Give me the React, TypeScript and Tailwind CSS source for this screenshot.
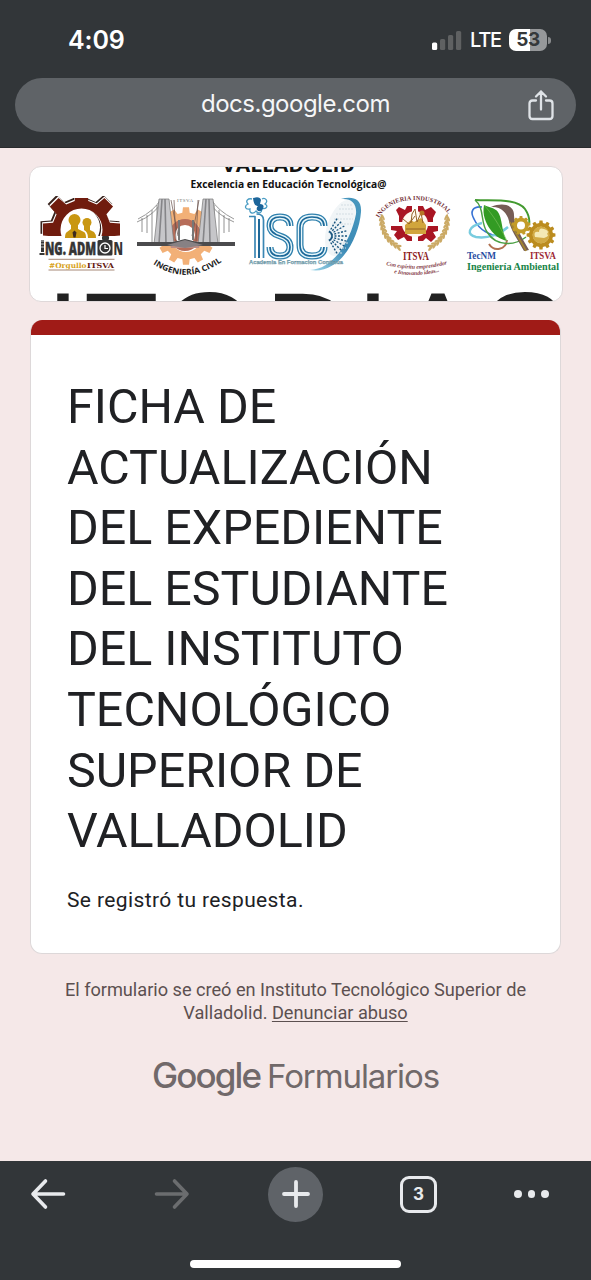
function Gear({ cx, cy, r, teeth, fill, hole, depth = 0.22 }: { cx: number; cy: number; r: number; teeth: number; fill: string; hole: number; depth?: number }) {
  const pts: string[] = [];
  const step = (Math.PI * 2) / teeth;
  for (let i = 0; i < teeth; i++) {
    const a = i * step - Math.PI / 2;
    const inner = r * (1 - depth);
    [[-0.3, inner], [-0.2, r], [0.2, r], [0.3, inner]].forEach(([o, q]) => {
      pts.push(`${(cx + Math.cos(a + o * step) * q).toFixed(2)} ${(cy + Math.sin(a + o * step) * q).toFixed(2)}`);
    });
  }
  const d = `M${pts.join('L')}Z M${cx - hole} ${cy}a${hole} ${hole} 0 1 0 ${hole * 2} 0a${hole} ${hole} 0 1 0 ${-hole * 2} 0Z`;
  return <path d={d} fill={fill} fillRule="evenodd" />;
}

function AdmonLogo() {
  return (
    <g>
      <defs>
        <clipPath id="admonTop"><path d="M38 196H68V198H94V196H128V236H38Z" /></clipPath>
      </defs>
      <g clipPath="url(#admonTop)">
        <Gear cx={80} cy={227.5} r={40} teeth={8} fill="#38231d" hole={20} depth={0.25} />
        <Gear cx={81.2} cy={228.5} r={39.5} teeth={8} fill="#fff" hole={20} depth={0.25} />
        <Gear cx={81.5} cy={229.5} r={39} teeth={8} fill="#701c0e" hole={21} depth={0.25} />
      </g>
      <g fill="#c99712">
        <circle cx="74.500" cy="220" r="6" />
        <path d="M71 223h7v6l6 3q2 1 2 6H65q0-5 2-6l4-3z" />
        <circle cx="87" cy="222.500" r="4.500" />
        <path d="M84 225h6v5l4 2q2 2 2 6h-8q0-6-4-8z" />
      </g>
      <path d="M74.500 230.500l2 2-1 5h-2l-1-5z" fill="#3c2a20" />
      <g fill="#353535" fontFamily="'Open Sans', 'Noto Sans', sans-serif" fontWeight="800">
        <rect x="41" y="240" width="3" height="12" />
        <path d="M40 241h4m-4 3h4m-4 3h4" stroke="#fff" strokeWidth=".7" />
        <rect x="39.500" y="253" width="5" height="2" />
        <text x="45" y="255" fontSize="17" textLength="51" lengthAdjust="spacingAndGlyphs" stroke="#353535" strokeWidth=".5">NG. ADM</text>
        <rect x="97.500" y="240" width="15" height="15.500" rx="1.500" />
        <rect x="102" y="236" width="7" height="4" rx="1" />
        <circle cx="105" cy="248" r="5" fill="none" stroke="#fff" strokeWidth="1.300" />
        <path d="M105 245v3.500h3" fill="none" stroke="#fff" strokeWidth="1.200" />
        <text x="113.500" y="255" fontSize="17" textLength="9.500" lengthAdjust="spacingAndGlyphs">N</text>
      </g>
      <path d="M48.500 259.300h66M48.500 270h66" stroke="#8f6a54" strokeWidth=".8" />
      <g fontFamily="'DejaVu Serif', serif" fontWeight="700" fontSize="7">
        <text x="49" y="267.500" fill="#d7a21a" textLength="37.500" lengthAdjust="spacingAndGlyphs">#Orgullo</text>
        <text x="87" y="267.500" fill="#64180f" textLength="27" lengthAdjust="spacingAndGlyphs">ITSVA</text>
      </g>
    </g>
  );
}

function BridgeTower({ x }: { x: number }) {
  return (
    <g>
      <path d={`M${x - 5} 199h10l5 45h-20z`} fill="#c6c6c9" stroke="#777" strokeWidth=".7" />
      <path d={`M${x - 2} 199l-3 45M${x + 1} 199l1 45`} stroke="#858588" strokeWidth="1.600" fill="none" />
    </g>
  );
}

function CivilLogo() {
  return (
    <g>
      <Gear cx={186} cy={236} r={29} teeth={12} fill="#f2b077" hole={16} depth={0.19} />
      <circle cx="185" cy="235" r="13" fill="none" stroke="#b76d59" strokeWidth="6" />
      <path d="M169 241h32l-2 7h-28z" fill="#bd8e85" />
      <path d="M137 222q18-7 27-23M138 219q16-8 23-20M234 222q-18-7-27-23M234 219q-16-8-23-20" fill="none" stroke="#8c8c8c" strokeWidth=".9" />
      <path d="M142 218v14M147 215v18M152 210v32M157 205v37M229 218v14M224 215v18M219 210v32M214 205v37" stroke="#777" strokeWidth=".8" />
      <path d="M171 200l7 36M174 200l2 42M199 200l-7 36M198 200l-2 42" stroke="#674f49" strokeWidth=".7" />
      <BridgeTower x={164} />
      <BridgeTower x={208} />
      <path d="M137 242h36l12-3 12 3h38v4h-40l-10-4-10 4h-38z" fill="#4b4b4d" />
      <path d="M167 245l18-5 18 5-18 3z" fill="#878184" />
      <path d="M179 220v20M193 220v20" stroke="#777" strokeWidth="2" />
      <text x="177" y="202" fontFamily="'Liberation Serif', serif" fontSize="5" fill="#777" textLength="16">ITSVA</text>
      <path id="civilArc" d="M153 264Q186 286 220 263" fill="none" />
      <text fontFamily="'Open Sans', 'Noto Sans', sans-serif" fontWeight="700" fontSize="8" fill="#222">
        <textPath href="#civilArc" textLength="74" lengthAdjust="spacingAndGlyphs">INGENIERÍA CIVIL</textPath>
      </text>
    </g>
  );
}

const RAYS = [-60, -45, -30, -15, 0, 15, 30, 45, 60];

function IscLogo() {
  const s = 'M290 226q0-9-10-9t-10 9q0 7 10 10t10 11q0 9-10 9t-10-9';
  const c = 'M324 226q0-9-12-9t-12 11v17q0 11 12 11t12-9';
  return (
    <g>
      <defs>
        <linearGradient id="orbit" x1="0" y1="1" x2="1" y2="0">
          <stop offset="0" stopColor="#9ed7e9" />
          <stop offset=".5" stopColor="#3b89b5" />
          <stop offset="1" stopColor="#4999bf" />
        </linearGradient>
      </defs>
      <ellipse cx="341" cy="228" rx="14" ry="29" fill="#f1f5f7" transform="rotate(18 341 228)" />
      <path d="M341 199C352 196 362 198 361 212C359 238 340 275 310 270C334 269 351 240 356 214C357 203 351 198 341 199Z" fill="url(#orbit)" />
      <g stroke="#d3dee4" strokeWidth="1.200" strokeDasharray="2 1">
        <path d="M341 205h12M339 209h15M336 214h18M334 219h19M332 224h19M340 243h8M336 248h10M334 253h8" />
      </g>
      <path d="M252 199c-4-1-7 2-4 5-4 2-3 6 2 5-1 5 4 5 6 2 3 4 7 1 5-3 5 2 8-2 4-4 4-3 0-7-3-5" fill="#fff" stroke="#4b9dc4" strokeWidth="1.300" />
      <path d="M253 198q7-2 8 2l-1 4q5 0 3 5-3 4-6 1-1-2 1-4-4 1-5-8z" fill="#1c659a" />
      <g fill="none" strokeLinejoin="round">
        <path d="M249 216.500h6V258M263.500 258V220q0-6-7-6" stroke="#3b87b4" strokeWidth="1.700" />
        <path d="M259 219V258" stroke="#1f6898" strokeWidth="2" />
        <path d={s} stroke="#2f80ad" strokeWidth="7" />
        <path d={s} stroke="#e9f7fb" strokeWidth="4.400" />
        <path d={s} stroke="#1b6899" strokeWidth="1.700" />
        <path d={c} stroke="#2f80ad" strokeWidth="7" />
        <path d={c} stroke="#e9f7fb" strokeWidth="4.400" />
        <path d={c} stroke="#1b6899" strokeWidth="1.700" />
      </g>
      <g stroke="#17547e" strokeWidth="1.400" strokeDasharray="2 1.500">
        {RAYS.map((a) => <path key={a} d="M331 236h16" transform={`rotate(${a} 327 236)`} />)}
      </g>
      <text x="249" y="264" fontFamily="'Liberation Sans', sans-serif" fontSize="5.800" fontWeight="700" fill="#8ebbc9" stroke="#527b8c" strokeWidth=".25" textLength="94" lengthAdjust="spacingAndGlyphs">Academia En Formacion Continua</text>
    </g>
  );
}

const LAUREL = Array.from({ length: 9 }, (_, i) => i);

function IndustrialLogo() {
  return (
    <g>
      <g fill="#a91523">
        <path d="M396 210l3-3 6 3 2-4h5v16h-13v-6z" />
        <path d="M418 206h5l2 4 6-3 5 5-3 6v4h-15z" />
        <path d="M391 226h21v15h-5l-3-4-6 3-4-5 3-4-6-1z" />
        <path d="M418 226h20v5l-5 1 3 5-5 5-5-4-3 3h-5z" />
      </g>
      <circle cx="415" cy="224" r="13" fill="#fff8ef" />
      <path d="M405 225l6-5 3 2 7-4 5 7v9h-21z" fill="#d1a53c" />
      <path d="M411 223l1-9 3-5 2 13 4-9 2 10M403 219l6 5 6-8M406 229h19" fill="none" stroke="#936227" strokeWidth="1" />
      <circle cx="422" cy="213" r="2.500" fill="#b77727" />
      {LAUREL.map((i) => {
        const a = 2.08 + i * 0.14;
        const x = 415 + Math.cos(a) * 34;
        const y = 220 + Math.sin(a) * 32;
        const deg = (a * 180) / Math.PI;
        return (
          <g key={i} fill="#cbaa66">
            <ellipse cx={x} cy={y} rx="1.300" ry="3.600" transform={`rotate(${deg + 205} ${x} ${y})`} />
            <ellipse cx={x - 2} cy={y} rx="1.200" ry="3.300" transform={`rotate(${deg - 30} ${x} ${y})`} />
            <ellipse cx={829 - x} cy={y} rx="1.300" ry="3.600" transform={`rotate(${-deg - 205} ${829 - x} ${y})`} />
            <ellipse cx={831 - x} cy={y} rx="1.200" ry="3.300" transform={`rotate(${-deg + 30} ${829 - x} ${y})`} />
          </g>
        );
      })}
      <path id="industrialArc" d="M379 218Q389 200 415 200T450 217" fill="none" />
      <text fontFamily="'Liberation Serif', serif" fontSize="6.200" fontWeight="700" fill="#733037">
        <textPath href="#industrialArc" textLength="80">INGENIERIA INDUSTRIAL</textPath>
      </text>
      <text x="403" y="260" fontFamily="'Liberation Serif', serif" fontSize="13" fontWeight="700" fill="#8c1820" textLength="26" lengthAdjust="spacingAndGlyphs">ITSVA</text>
      <g fontFamily="'Liberation Serif', serif" fontSize="5.800" fontStyle="italic" fontWeight="700" fill="#854149">
        <path id="mottoOne" d="M386 265Q416 273 448 264" fill="none" />
        <path id="mottoTwo" d="M394 273Q417 278 441 271" fill="none" />
        <text><textPath href="#mottoOne" textLength="62">Con espíritu emprendedor</textPath></text>
        <text><textPath href="#mottoTwo" textLength="46">e Innovando ideas...</textPath></text>
      </g>
    </g>
  );
}

function AmbientalLogo() {
  return (
    <g>
      <path d="M482 207c-10-1-12 5-8 12 5 11 16 17 27 17" fill="none" stroke="#3974d5" strokeWidth="1.600" />
      <path d="M482 223c-14 3-16 12-6 14 12 2 24-3 32-10" fill="none" stroke="#79ccdf" strokeWidth="2.400" />
      <path d="M489 244c5 8 17 6 18-4" fill="none" stroke="#b17150" strokeWidth="2" />
      <path d="M484 205c-2 10 2 18 6 24 5 7 10 10 17 12-6-9-4-26-11-31-4-3-8-3-12-5z" fill="#339b24" />
      <path d="M484 205c8 9 15 19 23 36" fill="none" stroke="#75bf58" strokeWidth=".7" />
      <path d="M475 200c18 1 42-2 50 9 4 6 5 11 4 16" fill="none" stroke="#439a30" strokeWidth="2" />
      <path d="M475 200c10 8 5 22 12 32 10 16 29 13 39 5" fill="none" stroke="#4ba044" strokeWidth="1.500" />
      <path d="M491 207c12-5 23-2 23 8 0 9 5 18 15 35l-5 1c-7-13-13-20-15-30-2-9-9-15-18-14z" fill="#765d56" />
      <path d="M510 222c5 11 11 19 16 29" fill="none" stroke="#a2852e" strokeWidth="1.600" />
      <Gear cx={521} cy={225.5} r={9.5} teeth={9} fill="#c39b29" hole={4} depth={0.18} />
      <Gear cx={541} cy={235} r={14.5} teeth={12} fill="#bb8c1f" hole={8.2} depth={0.17} />
      <circle cx="541" cy="235" r="8.500" fill="#d1aa45" />
      <path d="M535 237q-2-6 4-5 0-5 5-3 6 2 3 5 3 2-3 4z" fill="#f4e9b5" />
      <g fontFamily="'Liberation Serif', serif" fontWeight="700">
        <text x="467" y="258.500" fontSize="9.500" fill="#284da2" textLength="29" lengthAdjust="spacingAndGlyphs">TecNM</text>
        <text x="530" y="258.500" fontSize="9.500" fill="#9d2634" textLength="26" lengthAdjust="spacingAndGlyphs">ITSVA</text>
        <text x="467" y="270" fontSize="10" fill="#168447" textLength="92" lengthAdjust="spacingAndGlyphs">Ingeniería Ambiental</text>
      </g>
    </g>
  );
}

function Banner() {
  return (
    <div className="ml-[29px] mr-7 h-[136px] shrink-0 overflow-hidden rounded-xl border border-[#dfd8d9] bg-white">
      <svg viewBox="30 167 532 134" className="block h-[134px] w-[532px]">
        <g fontFamily="'Open Sans', 'Noto Sans', sans-serif" fontWeight="700" fill="#111">
          <text x="222" y="172" fontSize="19" textLength="133" lengthAdjust="spacingAndGlyphs">VALLADOLID</text>
          <text x="190.500" y="188" fontSize="10.500" textLength="196" lengthAdjust="spacingAndGlyphs">Excelencia en Educación Tecnológica@</text>
        </g>
        <AdmonLogo />
        <CivilLogo />
        <IscLogo />
        <IndustrialLogo />
        <AmbientalLogo />
        <g fontFamily="'Liberation Sans', Arial, sans-serif" fontSize="122" fill="#222">
          <text x="46" y="378">I</text>
          <text x="84" y="378">T</text>
          <text x="162" y="378">O</text>
          <text x="265" y="378">D</text>
          <text x="356" y="378">I</text>
          <text x="397" y="378">A</text>
          <text x="477" y="378">G</text>
        </g>
      </svg>
    </div>
  );
}

function StatusBar() {
  return (
    <div className="flex h-[78px] items-start justify-between pl-[68px] pr-[40px]">
      <span className="pt-[24px] font-[Inter,sans-serif] text-[25px] leading-8 font-semibold tracking-[-0.1px] text-white">4:09</span>
      <div className="flex items-center pt-[28px]">
        <svg className="h-5 w-[30px]" viewBox="0 0 30 20">
          <rect x="0" y="12.500" width="5.200" height="7.500" rx="1.600" fill="#fff" />
          <rect x="8" y="9" width="5.200" height="11" rx="1.600" fill="#5f6162" />
          <rect x="16" y="5" width="5.200" height="15" rx="1.600" fill="#5f6162" />
          <rect x="24" y="1" width="5.200" height="19" rx="1.600" fill="#5f6162" />
        </svg>
        <span className="ml-[8px] w-[32px] font-[Inter,sans-serif] text-[20px] leading-6 font-medium tracking-[-1.2px] whitespace-nowrap text-white">LTE</span>
        <div className="ml-[7px] flex h-[22px] w-[38px] items-center justify-center rounded-[7px] bg-linear-to-r from-white from-54% to-[#96989a] to-54% font-[Inter,sans-serif] text-[19px] font-bold tracking-[-0.5px] text-[#35383a]">53</div>
        <div className="ml-px h-[7px] w-[3px] rounded-r-full bg-[#8a8c8e]" />
      </div>
    </div>
  );
}

function ShareIcon() {
  return (
    <svg viewBox="0 0 26 32" className="h-8 w-[26px]" fill="none" stroke="#dfe3e7" strokeWidth="2.300" strokeLinecap="round" strokeLinejoin="round">
      <path d="M8 11.500H4.500Q1.500 11.500 1.500 14.500V27Q1.500 30 4.500 30H21.500Q24.500 30 24.500 27V14.500Q24.500 11.500 21.500 11.500H18M13 20.500V2.500M8 7.500L13 2.500L18 7.500" />
    </svg>
  );
}

function BottomBar() {
  return (
    <nav className="flex h-[119px] shrink-0 flex-col items-center justify-between bg-[#323639] pt-[5px] pb-[12px]">
      <div className="flex h-[56px] w-full items-center">
        <svg className="ml-[30px] h-9 w-9" viewBox="0 0 36 36" fill="none" stroke="#e8eaed" strokeWidth="3.600" strokeLinecap="round" strokeLinejoin="round">
          <path d="M33.500 18H3M15.500 5L3 18L15.500 31" />
        </svg>
        <svg className="ml-[88px] h-9 w-9" viewBox="0 0 36 36" fill="none" stroke="#6b6d6f" strokeWidth="3.600" strokeLinecap="round" strokeLinejoin="round">
          <path d="M2.500 18H33M20.500 5L33 18L20.500 31" />
        </svg>
        <div className="ml-[78px] flex size-[55px] items-center justify-center rounded-full bg-[#5f6368]">
          <svg className="size-8" viewBox="0 0 32 32" stroke="#e8eaed" strokeWidth="3.800" strokeLinecap="round">
            <path d="M4 16H28M16 4V28" />
          </svg>
        </div>
        <div className="ml-[77px] flex size-[37px] items-center justify-center rounded-[9px] border-[3px] border-[#e8eaed] pt-px font-[Inter,sans-serif] text-[17px] font-bold text-[#e8eaed]">3</div>
        <div className="ml-[77px] flex gap-[6px]">
          <i className="size-[7.500px] rounded-full bg-[#e8eaed]" />
          <i className="size-[7.500px] rounded-full bg-[#e8eaed]" />
          <i className="size-[7.500px] rounded-full bg-[#e8eaed]" />
        </div>
      </div>
      <div className="h-[8px] w-[211px] rounded-full bg-white" />
    </nav>
  );
}

const TITLE = [
  'FICHA DE',
  'ACTUALIZACIÓN',
  'DEL EXPEDIENTE',
  'DEL ESTUDIANTE',
  'DEL INSTITUTO',
  'TECNOLÓGICO',
  'SUPERIOR DE',
  'VALLADOLID',
];

export default function App() {
  return (
    <div className="flex h-[1280px] w-[591px] flex-col overflow-hidden bg-[#f5e8e8] font-[Roboto,sans-serif]">
      <header className="h-[148px] shrink-0 border-b border-[#292b2d] bg-[#323639]">
        <StatusBar />
        <div className="mx-[15px] grid h-[54px] grid-cols-[26px_1fr_26px] items-center rounded-full bg-[#5f6367] px-[22px]">
          <span className="col-start-2 pb-[3px] text-center font-[Inter,sans-serif] text-[24px] tracking-[-0.5px] text-[#f5f6f7]">docs.google.com</span>
          <ShareIcon />
        </div>
      </header>
      <main className="flex flex-1 flex-col pt-[18px]">
        <Banner />
        <section className="mx-[30px] mt-[18px] h-[634px] shrink-0 overflow-hidden rounded-xl border border-t-0 border-[#ddd8d9] bg-white">
          <div className="-mx-px h-[15px] bg-[#a01b17]" />
          <h1 className="mt-[42px] ml-[36px] text-[48.4px] leading-[60.6px] text-[#202124]">
            {TITLE.map((line) => <span key={line} className="block whitespace-nowrap">{line}</span>)}
          </h1>
          <p className="mt-[23px] ml-[36px] text-[21px] leading-[30px] tracking-[0.38px] text-[#202124]">Se registró tu respuesta.</p>
        </section>
        <p className="mt-[24px] text-center text-[18.2px] leading-[23px] tracking-[-0.02px] text-[#5c5050]">
          El formulario se creó en Instituto Tecnológico Superior de<br />
          Valladolid. <a className="underline underline-offset-2">Denunciar abuso</a>
        </p>
        <div className="mt-[28px] flex items-baseline justify-center gap-[7px] font-[Inter,sans-serif] leading-[46px] text-[#71696a]">
          <span className="text-[35px] font-medium tracking-[-1.9px]">Google</span>
          <span className="text-[33px] tracking-[-1.1px]">Formularios</span>
        </div>
      </main>
      <BottomBar />
    </div>
  );
}
